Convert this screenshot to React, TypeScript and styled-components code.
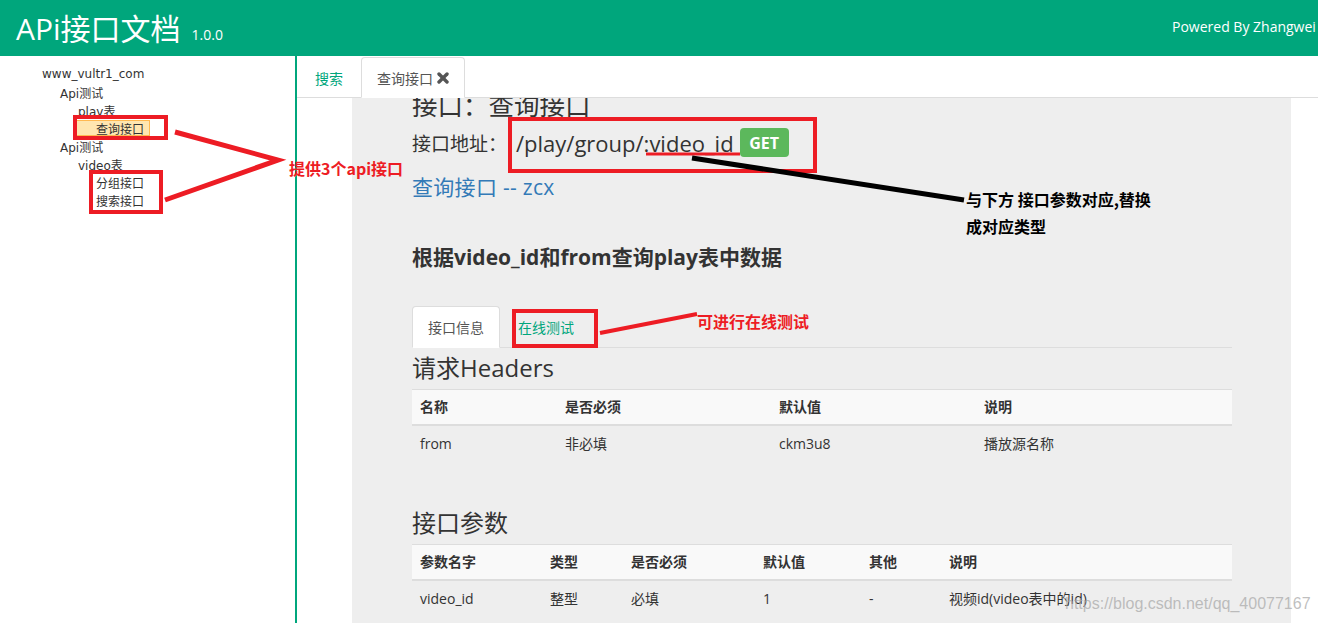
import React from "react";
import styled, { createGlobalStyle, css } from "styled-components";

const GREEN = "#00a67c";
const RED = "#ed1c24";

const GlobalStyle = createGlobalStyle`
  html, body { margin: 0; padding: 0; }
  body {
    font-family: "Open Sans", "Noto Sans CJK SC", sans-serif;
    color: #333;
    background: #fff;
  }
  * { box-sizing: border-box; }
`;

const Page = styled.div`
  position: relative;
  width: 1318px;
  height: 623px;
  overflow: hidden;
  display: flex;
  flex-direction: column;
`;

const Header = styled.header`
  height: 56px;
  flex: none;
  background: ${GREEN};
  color: #fff;
  display: flex;
  align-items: center;
  padding-left: 16px;
  overflow: hidden;
`;

const Brand = styled.div`
  display: flex;
  align-items: baseline;
`;

const Title = styled.h1`
  margin: 0;
  font-size: 30px;
  font-weight: 400;
  line-height: 1.1;
`;

const Version = styled.small`
  font-size: 14px;
  margin-left: 11px;
`;

const Powered = styled.div`
  margin-left: auto;
  width: 146px;
  flex: none;
  white-space: nowrap;
  font-size: 14px;
  margin-bottom: 4px;
`;

const Body = styled.div`
  flex: 1;
  min-height: 0;
  display: flex;
`;

const Sidebar = styled.aside`
  width: 297px;
  flex: none;
  border-right: 2px solid ${GREEN};
  padding-top: 9px;
  font-family: "DejaVu Sans", Verdana, "Noto Sans CJK SC", sans-serif;
  font-size: 12px;
  color: #333;
`;

const Node = styled.div<{ $level: number }>`
  height: 18px;
  display: flex;
  align-items: center;
  padding-left: ${(p) => 21 + p.$level * 18}px;
`;

const NodeLabel = styled.span<{ $selected?: boolean }>`
  display: inline-flex;
  align-items: center;
  height: 16px;
  padding: 0 5px 0 20px;
  border: 1px solid transparent;
  white-space: nowrap;
  ${(p) =>
    p.$selected &&
    css`
      background: #ffe6b0;
      border-color: #ffb951;
    `}
`;

const Main = styled.main`
  flex: 1;
  min-width: 0;
  display: flex;
  flex-direction: column;
`;

const TabBar = styled.nav`
  height: 42px;
  flex: none;
  display: flex;
  align-items: flex-end;
  border-bottom: 1px solid #ddd;
  padding-left: 2px;
`;

const Tab = styled.div<{ $active?: boolean; $h?: number }>`
  height: ${(p) => p.$h ?? 41}px;
  margin-right: 2px;
  margin-bottom: -1px;
  padding: 0 15px;
  display: flex;
  align-items: center;
  gap: 4px;
  font-size: 14px;
  border: 1px solid transparent;
  border-radius: 4px 4px 0 0;
  color: ${GREEN};
  white-space: nowrap;
  ${(p) =>
    p.$active &&
    css`
      color: #555;
      background: #fff;
      border-color: #ddd #ddd transparent;
    `}
`;

const CloseIcon = () => (
  <svg width="12" height="12" viewBox="0 0 12 12">
    <g stroke="#555" strokeWidth="3.4" strokeLinecap="round">
      <line x1="2" y1="2" x2="10" y2="10" />
      <line x1="10" y1="2" x2="2" y2="10" />
    </g>
  </svg>
);

const Content = styled.div`
  flex: 1;
  min-height: 0;
  display: flex;
  padding: 0 27px 0 55px;
`;

const Panel = styled.section`
  flex: 1;
  background: #eee;
  padding: 0 59px 0 60px;
  overflow: hidden;
  display: flex;
  flex-direction: column;
`;

const ApiTitle = styled.h2`
  margin: -8px 0 0;
  font-size: 25.5px;
  line-height: 30px;
  font-weight: 400;
  color: #333;
`;

const AddressRow = styled.div`
  margin-top: 8px;
  display: flex;
  align-items: center;
  height: 29px;
  font-size: 19px;
  color: #333;
  white-space: nowrap;
`;

const Path = styled.span`
  margin-left: 9px;
  font-size: 22px;
`;

const Method = styled.span`
  margin-left: 6px;
  width: 49px;
  height: 29px;
  display: inline-flex;
  align-items: center;
  justify-content: center;
  background: #5cb85c;
  color: #fff;
  font-weight: 700;
  font-size: 16px;
  border-radius: 4px;
`;

const ApiLink = styled.a`
  margin-top: 16px;
  font-size: 21px;
  line-height: 28px;
  color: #337ab7;
  text-decoration: none;
  align-self: flex-start;
  letter-spacing: 0.3px;
`;

const Desc = styled.h3`
  margin: 42px 0 0;
  font-size: 21px;
  line-height: 28px;
  font-weight: 700;
  color: #333;
`;

const SubTabs = styled.div`
  margin-top: 35px;
  height: 42px;
  flex: none;
  display: flex;
  align-items: flex-end;
  border-bottom: 1px solid #ddd;
`;

const SectionTitle = styled.h3<{ $gap: number }>`
  margin: ${(p) => p.$gap}px 0 0;
  font-size: 24px;
  line-height: 28px;
  font-weight: 400;
  color: #333;
`;

const Table = styled.table`
  margin-top: 7px;
  width: 100%;
  border-collapse: collapse;
  font-size: 14px;
  color: #333;
`;

const Th = styled.th<{ $w?: number }>`
  width: ${(p) => (p.$w ? `${p.$w}px` : "auto")};
  text-align: left;
  padding: 7px 8px;
  line-height: 20px;
  font-weight: 700;
  background: #f9f9f9;
  border-top: 1px solid #ddd;
  border-bottom: 2px solid #ddd;
`;

const Td = styled.td`
  padding: 8px 8px;
  line-height: 19px;
`;

const Watermark = styled.div`
  position: absolute;
  left: 1065px;
  top: 594px;
  font-family: "Liberation Sans", Arial, sans-serif;
  font-size: 16px;
  line-height: 20px;
  color: rgba(170, 170, 170, 0.75);
  white-space: nowrap;
  pointer-events: none;
`;

const Overlay = styled.svg`
  position: absolute;
  left: 0;
  top: 0;
  pointer-events: none;
`;

const Note = styled.div<{ $x: number; $y: number; $color: string; $lh?: number }>`
  position: absolute;
  left: ${(p) => p.$x}px;
  top: ${(p) => p.$y}px;
  color: ${(p) => p.$color};
  font-family: "Noto Sans CJK SC", sans-serif;
  font-weight: 700;
  font-size: 16px;
  line-height: ${(p) => p.$lh ?? 20}px;
  white-space: nowrap;
  pointer-events: none;
`;

const tree = [
  { level: 0, text: "www_vultr1_com" },
  { level: 1, text: "Api测试" },
  { level: 2, text: "play表" },
  { level: 3, text: "查询接口", selected: true },
  { level: 1, text: "Api测试" },
  { level: 2, text: "video表" },
  { level: 3, text: "分组接口" },
  { level: 3, text: "搜索接口" },
];

const headerCols = [
  { name: "名称", w: 145 },
  { name: "是否必须", w: 214 },
  { name: "默认值", w: 205 },
  { name: "说明" },
];
const headerRow = ["from", "非必填", "ckm3u8", "播放源名称"];

const paramCols = [
  { name: "参数名字", w: 130 },
  { name: "类型", w: 81 },
  { name: "是否必须", w: 132 },
  { name: "默认值", w: 106 },
  { name: "其他", w: 80 },
  { name: "说明" },
];
const paramRow = ["video_id", "整型", "必填", "1", "-", "视频id(video表中的id)"];

type Col = { name: string; w?: number };

const DataTable = ({ cols, row }: { cols: Col[]; row: string[] }) => (
  <Table>
    <thead>
      <tr>
        {cols.map((c) => (
          <Th key={c.name} $w={c.w}>
            {c.name}
          </Th>
        ))}
      </tr>
    </thead>
    <tbody>
      <tr>
        {row.map((v, i) => (
          <Td key={i}>{v}</Td>
        ))}
      </tr>
    </tbody>
  </Table>
);

export default function App() {
  return (
    <>
      <GlobalStyle />
      <Page>
        <Header>
          <Brand>
            <Title>APi接口文档</Title>
            <Version>1.0.0</Version>
          </Brand>
          <Powered>Powered By Zhangwei</Powered>
        </Header>
        <Body>
          <Sidebar>
            {tree.map((n, i) => (
              <Node key={i} $level={n.level}>
                <NodeLabel $selected={n.selected}>{n.text}</NodeLabel>
              </Node>
            ))}
          </Sidebar>
          <Main>
            <TabBar>
              <Tab>搜索</Tab>
              <Tab $active>
                查询接口
                <CloseIcon />
              </Tab>
            </TabBar>
            <Content>
              <Panel>
                <ApiTitle>接口：查询接口</ApiTitle>
                <AddressRow>
                  接口地址：
                  <Path>/play/group/:video_id</Path>
                  <Method>GET</Method>
                </AddressRow>
                <ApiLink href="#">查询接口 -- zcx</ApiLink>
                <Desc>根据video_id和from查询play表中数据</Desc>
                <SubTabs>
                  <Tab $active $h={42}>
                    接口信息
                  </Tab>
                  <Tab $h={42}>在线测试</Tab>
                </SubTabs>
                <SectionTitle $gap={6}>请求Headers</SectionTitle>
                <DataTable cols={headerCols} row={headerRow} />
                <SectionTitle $gap={48}>接口参数</SectionTitle>
                <DataTable cols={paramCols} row={paramRow} />
              </Panel>
            </Content>
          </Main>
        </Body>
        <Watermark>https://blog.csdn.net/qq_40077167</Watermark>
        <Overlay width={1318} height={623} viewBox="0 0 1318 623">
          <g stroke={RED} fill="none" strokeWidth={4}>
            <rect x={75} y={117} width={91} height={21} />
            <rect x={91} y={172} width={70} height={40} />
            <rect x={510} y={119} width={305} height={52} />
            <rect x={514} y={311} width={82} height={35} />
            <polyline points="175,132 278,160 165,200" strokeWidth={5} />
            <line x1={646} y1={154} x2={740} y2={154} strokeWidth={3} />
            <line x1={600} y1={333} x2={697} y2={314} strokeWidth={4} />
          </g>
          <line x1={692} y1={158} x2={964} y2={200} stroke="#000" strokeWidth={5} />
        </Overlay>
        <Note $x={289} $y={158} $color={RED}>
          提供3个api接口
        </Note>
        <Note $x={697} $y={311} $color={RED}>
          可进行在线测试
        </Note>
        <Note $x={966} $y={186} $color="#000" $lh={27}>
          与下方 接口参数对应,替换
          <br />
          成对应类型
        </Note>
      </Page>
    </>
  );
}
